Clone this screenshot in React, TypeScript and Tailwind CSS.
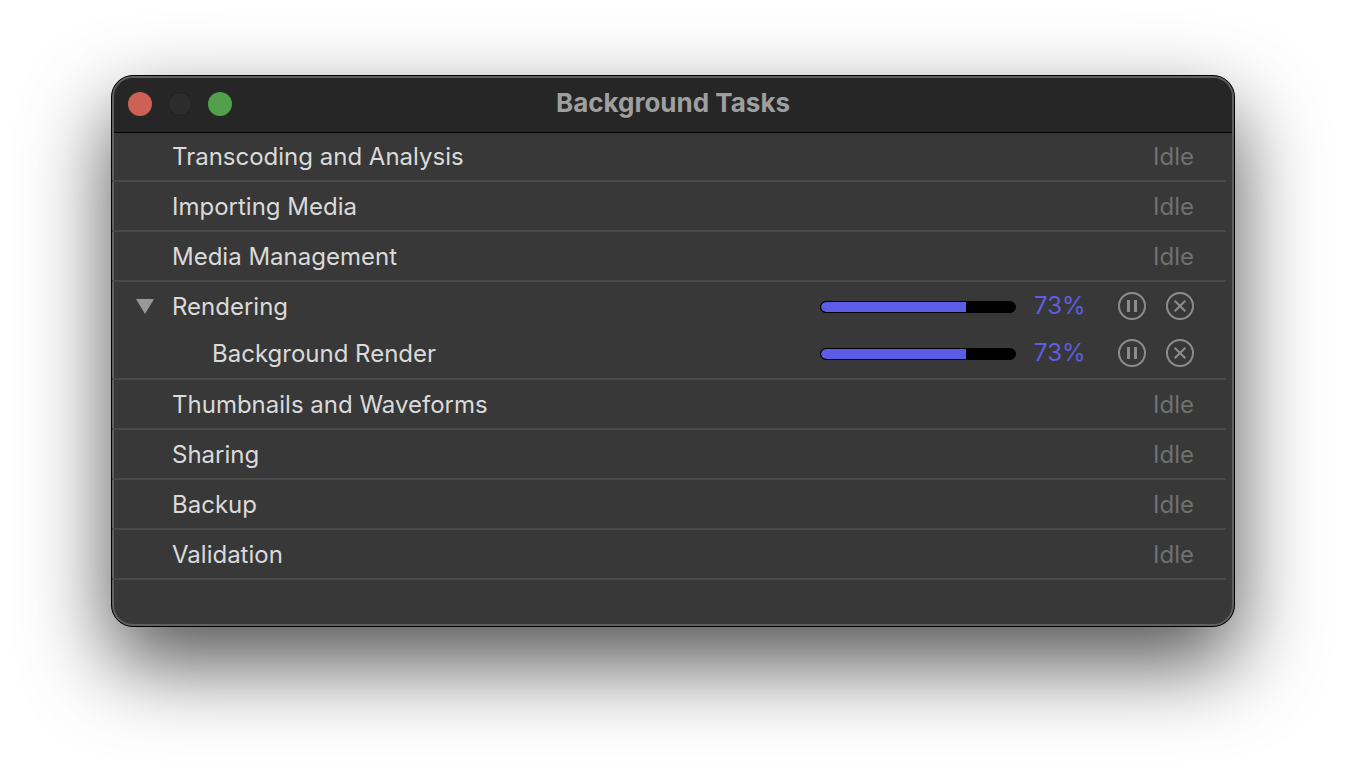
import type { ReactNode } from "react";

type Task = {
  name: string;
  progress?: number;
  children?: { name: string; progress: number }[];
};

const tasks: Task[] = [
  { name: "Transcoding and Analysis" },
  { name: "Importing Media" },
  { name: "Media Management" },
  {
    name: "Rendering",
    progress: 73,
    children: [{ name: "Background Render", progress: 73 }],
  },
  { name: "Thumbnails and Waveforms" },
  { name: "Sharing" },
  { name: "Backup" },
  { name: "Validation" },
];

function RoundButton({ label, children }: { label: string; children: ReactNode }) {
  return (
    <button type="button" aria-label={label} className="size-7 shrink-0 text-[#8c8c8c]">
      <svg viewBox="0 0 28 28" className="size-7" fill="none" stroke="currentColor" strokeWidth="2">
        <circle cx="14" cy="14" r="13" />
        {children}
      </svg>
    </button>
  );
}

function TaskProgress({ name, value }: { name: string; value: number }) {
  return (
    <div className="flex items-center">
      <div
        role="progressbar"
        aria-label={name}
        aria-valuenow={value}
        className="mt-0.5 h-3 w-[196px] overflow-hidden rounded-full border border-black bg-black"
      >
        <div className="h-full rounded-l-full bg-[#5c5ce6]" style={{ width: `calc(${value}% + 3px)` }} />
      </div>
      <span className="ml-[18px] w-[84px] text-[#5f5de0]">{value}%</span>
      <div className="flex gap-5">
        <RoundButton label={`Pause ${name}`}>
          <path d="M10.5 8v12M17.5 8v12" strokeWidth="3" />
        </RoundButton>
        <RoundButton label={`Cancel ${name}`}>
          <path d="M8.7 8.7l10.6 10.6M19.3 8.7L8.7 19.3" />
        </RoundButton>
      </div>
    </div>
  );
}

function TaskItem({ task }: { task: Task }) {
  return (
    <li className="border-b-2 border-[#4a4a4a]">
      <div className="flex h-12 items-center justify-between pr-8">
        <div className="flex items-center">
          <div className="flex w-[60px] justify-center pl-1.5">
            {task.children && (
              <button type="button" aria-label={`Collapse ${task.name}`} aria-expanded="true">
                <svg viewBox="0 0 18 15" className="h-[15px] w-[18px]" fill="#989898">
                  <path d="M0 0h18L9 15z" />
                </svg>
              </button>
            )}
          </div>
          <span className="pt-0.5">{task.name}</span>
        </div>
        {task.progress === undefined ? (
          <span className="pt-0.5 text-[#707070]">Idle</span>
        ) : (
          <TaskProgress name={task.name} value={task.progress} />
        )}
      </div>
      {task.children?.map((child) => (
        <div key={child.name} className="flex h-12 items-center justify-between pr-8 pb-0.5 pl-[100px]">
          <span className="pt-0.5">{child.name}</span>
          <TaskProgress name={child.name} value={child.progress} />
        </div>
      ))}
    </li>
  );
}

export default function App() {
  return (
    <main className="min-h-screen overflow-hidden bg-white px-[111px] pt-[75px] pb-[147px] font-['Inter',sans-serif]">
      <section className="overflow-hidden rounded-[22px] border border-black bg-[#383838] shadow-[0_36px_84px_rgba(0,0,0,0.68)]">
        <div className="rounded-[21px] border-2 border-[#606060]">
          <header className="grid h-[55px] grid-cols-[1fr_auto_1fr] items-center rounded-t-[19px] border-b border-black bg-[#262626] px-[14px] pb-0.5">
            <div className="flex gap-4">
              <button type="button" aria-label="Close" className="size-6 rounded-full bg-[#cd6155]" />
              <button type="button" aria-label="Minimize" className="size-6 rounded-full border border-[#222222] bg-[#2c2c2c]" />
              <button type="button" aria-label="Zoom" className="size-6 rounded-full bg-[#529f4c]" />
            </div>
            <h1 className="pb-0.5 text-[26px] leading-8 font-bold text-[#9f9f9f]">Background Tasks</h1>
          </header>
          <ul className="-mt-px -ml-0.5 pr-1.5 pb-11 text-2xl leading-8 text-[#dadada]">
            {tasks.map((task) => (
              <TaskItem key={task.name} task={task} />
            ))}
          </ul>
        </div>
      </section>
    </main>
  );
}
